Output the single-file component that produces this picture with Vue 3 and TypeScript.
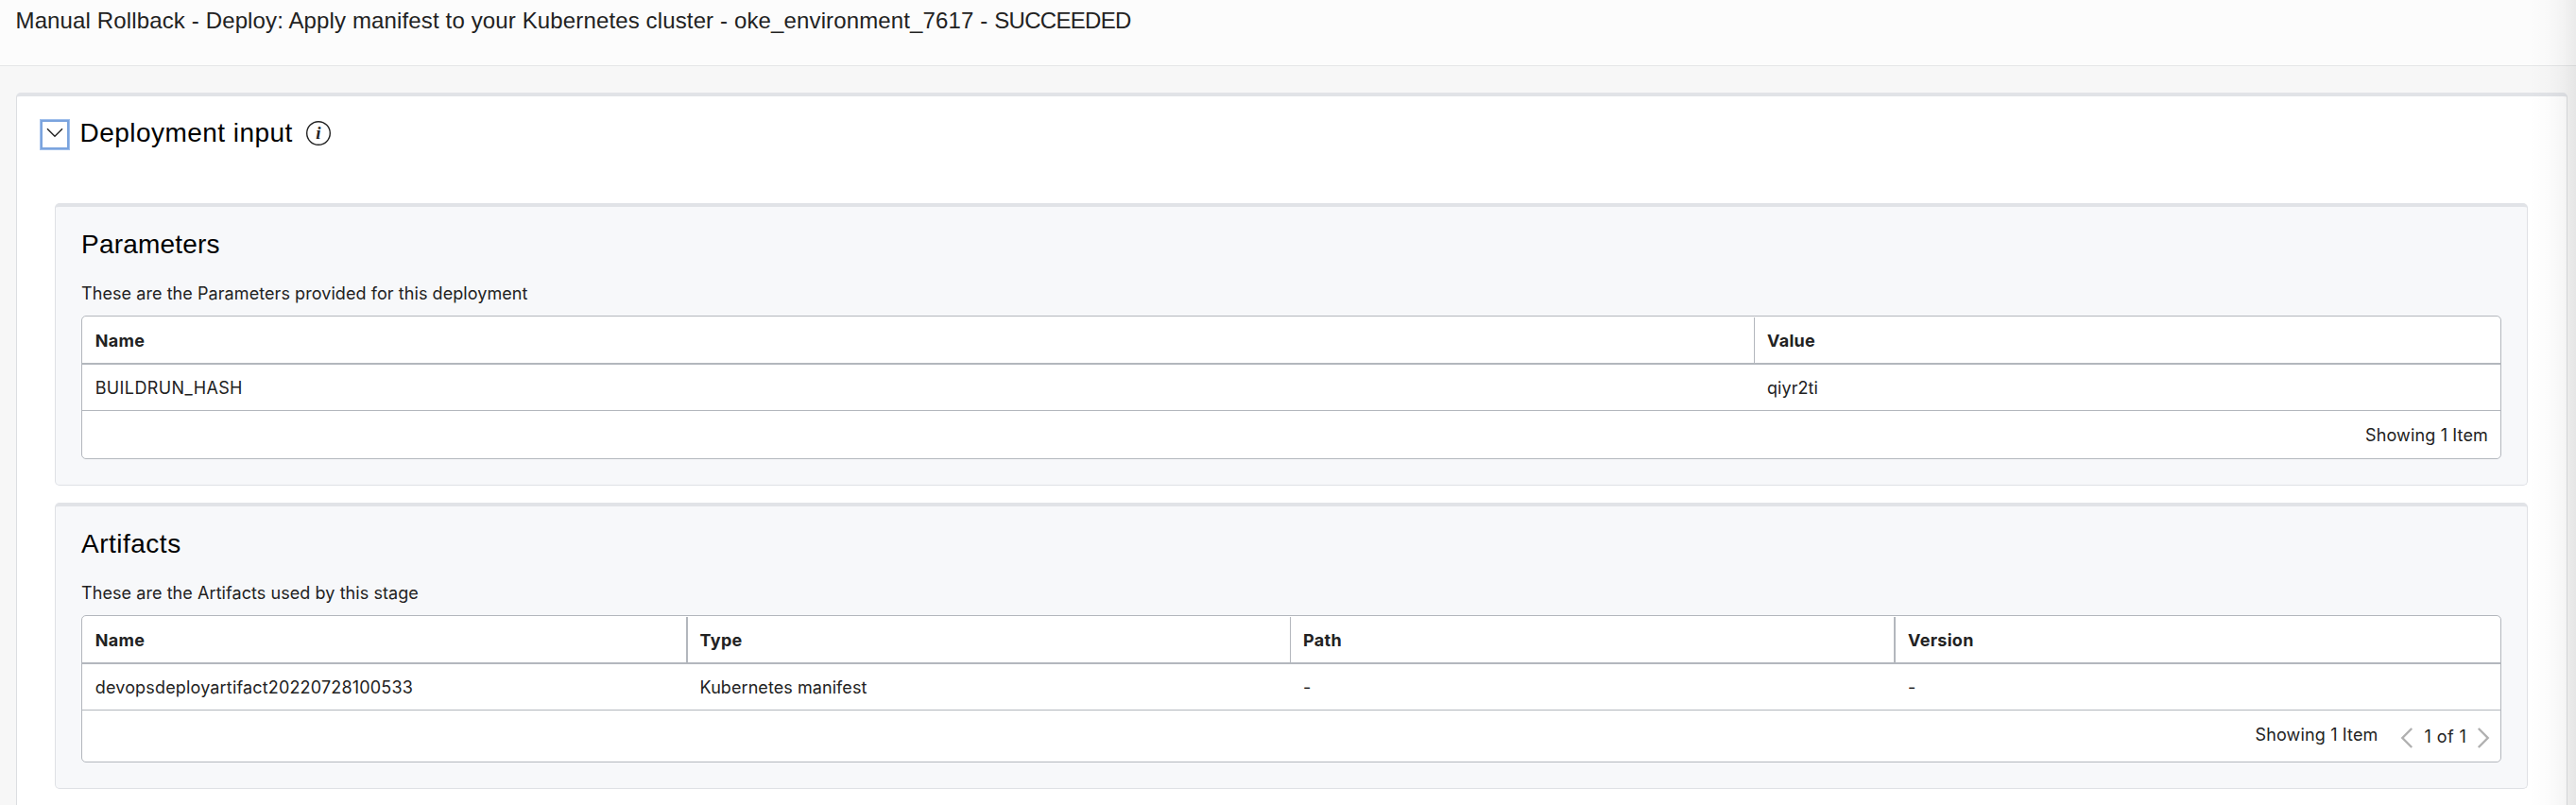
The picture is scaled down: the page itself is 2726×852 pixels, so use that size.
<script setup lang="ts">
import { ref } from 'vue'

interface Cell {
  text: string
  tracking?: 'snug' | 'loose'
}

interface Section {
  id: string
  title: string
  description: string
  columns: string[]
  rows: Cell[][]
  paged: boolean
}

const expanded = ref(true)

const sections: Section[] = [
  {
    id: 'parameters',
    title: 'Parameters',
    description: 'These are the Parameters provided for this deployment',
    columns: ['Name', 'Value'],
    rows: [[{ text: 'BUILDRUN_HASH', tracking: 'loose' }, { text: 'qiyr2ti' }]],
    paged: false,
  },
  {
    id: 'artifacts',
    title: 'Artifacts',
    description: 'These are the Artifacts used by this stage',
    columns: ['Name', 'Type', 'Path', 'Version'],
    rows: [
      [
        { text: 'devopsdeployartifact20220728100533', tracking: 'snug' },
        { text: 'Kubernetes manifest' },
        { text: '-' },
        { text: '-' },
      ],
    ],
    paged: true,
  },
]
</script>

<template>
  <div class="page">
    <header class="page-header">
      <h1>Manual Rollback - Deploy: Apply manifest to your Kubernetes cluster - oke_environment_7617 - <span class="status">SUCCEEDED</span></h1>
    </header>

    <main class="card">
      <div class="card-heading">
        <button class="toggle" type="button" aria-label="Toggle deployment input" @click="expanded = !expanded">
          <svg width="18" height="11" viewBox="0 0 18 11">
            <path d="M1 1.2 L9 9.2 L17 1.2" fill="none" stroke="#222" stroke-width="1.4" />
          </svg>
        </button>
        <h2>Deployment input</h2>
        <svg class="info" width="28" height="28" viewBox="0 0 28 28">
          <circle cx="14" cy="14" r="12.3" fill="none" stroke="#222" stroke-width="1.4" />
          <text x="14" y="20" text-anchor="middle">i</text>
        </svg>
      </div>

      <div v-if="expanded" class="panels">
        <section v-for="s in sections" :key="s.id" class="panel" :class="s.id">
          <h3>{{ s.title }}</h3>
          <p>{{ s.description }}</p>
          <div class="table">
            <div class="row head">
              <div v-for="c in s.columns" :key="c" class="cell">{{ c }}</div>
            </div>
            <div v-for="(r, i) in s.rows" :key="i" class="row body">
              <div v-for="(c, j) in r" :key="j" class="cell" :class="c.tracking">{{ c.text }}</div>
            </div>
            <div class="footer" :class="{ paged: s.paged }">
              <span class="count">Showing 1 Item</span>
              <div v-if="s.paged" class="pager">
                <svg width="14" height="22" viewBox="0 0 14 22">
                  <path d="M12.2 1 L2.3 11 L12.2 21" fill="none" stroke="#b0b0b0" stroke-width="2.4" />
                </svg>
                <span class="page-number">1 of 1</span>
                <svg width="14" height="22" viewBox="0 0 14 22">
                  <path d="M1.8 1 L11.7 11 L1.8 21" fill="none" stroke="#b0b0b0" stroke-width="2.4" />
                </svg>
              </div>
            </div>
          </div>
        </section>
      </div>
    </main>
    <div class="edge-shadow"></div>
  </div>
</template>

<style>
body {
  margin: 0;
  overflow: hidden;
}
</style>

<style scoped>
.page {
  position: relative;
  box-sizing: border-box;
  width: 100%;
  height: 852px;
  overflow: hidden;
  background: #f7f7f7;
  color: #222;
  font-family: Inter, "Liberation Sans", sans-serif;
  font-size: 18px;
  letter-spacing: 0.07px;
}

h1,
h2,
h3,
p {
  margin: 0;
  font-weight: 400;
}

.page-header {
  box-sizing: border-box;
  height: 70px;
  padding: 8px 16px 0 16.5px;
  border-bottom: 1px solid #e5e6e7;
  background: #fcfcfc;
}

h1 {
  font: 400 24px/28px "Liberation Sans", Arial, sans-serif;
  letter-spacing: 0.135px;
  white-space: nowrap;
}

.status {
  letter-spacing: -0.7px;
}

.card {
  box-sizing: border-box;
  height: 800px;
  margin: 28px 9px 0 17px;
  border: 1px solid #dcdee1;
  border-top: 4px solid #e1e3e7;
  border-radius: 5px;
  background: #fff;
}

.card-heading {
  display: flex;
  align-items: center;
  height: 33px;
  padding: 24px 0 0 24px;
}

.toggle {
  box-sizing: border-box;
  display: flex;
  align-items: center;
  justify-content: center;
  width: 32px;
  height: 33px;
  padding: 0 0 4px;
  border: 1px solid #9fbfec;
  background: #fff;
  box-shadow: inset 0 0 0 2px #7ba4de;
}

h2 {
  margin: -3px 0 0 10.5px;
  color: #000;
  font: 400 28px/32px "Liberation Sans", Arial, sans-serif;
  letter-spacing: 0.46px;
}

.info {
  margin: -3px 0 0 13px;
}

.info text {
  fill: #222;
  font: italic bold 19px "Liberation Serif", serif;
}

.panels {
  display: flex;
  flex-direction: column;
  gap: 18px;
  padding: 56px 41px 0 40px;
}

.panel {
  box-sizing: border-box;
  height: 299px;
  padding: 24px 27px 0;
  border: 1px solid #dfe1e5;
  border-top: 4px solid #e1e3e7;
  border-radius: 5px;
  background: #f7f8fa;
}

.artifacts {
  height: 303px;
}

h3 {
  height: 32px;
  color: #000;
  font: 400 28px/32px "Liberation Sans", Arial, sans-serif;
  letter-spacing: 0.2px;
}

.artifacts h3 {
  letter-spacing: 0.5px;
}

p {
  height: 24px;
  margin-top: 24px;
  line-height: 24px;
}

.table {
  box-sizing: border-box;
  margin-top: 11px;
  border: 1px solid #b3b7bd;
  border-radius: 5px;
  background: #fff;
}

.row {
  display: grid;
}

.parameters .row {
  grid-template-columns: 1770px 1fr;
}

.artifacts .row {
  grid-template-columns: 641px 638px 640px 1fr;
}

.head {
  height: 49px;
  border-bottom: 2px solid #b3b7bd;
  font-weight: 700;
  letter-spacing: 0.3px;
}

.cell {
  padding-left: 13px;
  line-height: 49px;
}

.cell:first-child {
  padding-left: 13.7px;
}

.artifacts .cell:nth-child(2) {
  padding-left: 12.6px;
}

.head .cell {
  margin-top: 1px;
  border-right: 1px solid #b3b7bd;
}

.artifacts .head .cell:nth-child(odd) {
  border-right-width: 2px;
}

.artifacts .head .cell:last-child,
.parameters .head .cell:last-child {
  border-right: 0;
}

.body {
  height: 48px;
  border-bottom: 1px solid #b3b7bd;
}

.snug {
  letter-spacing: 0.17px;
}

.loose {
  letter-spacing: 0.38px;
}

.footer {
  display: flex;
  align-items: center;
  justify-content: flex-end;
  height: 50px;
  padding-right: 13px;
}

.count {
  padding-top: 2px;
  line-height: 24px;
  letter-spacing: 0.15px;
}

.paged {
  height: 54px;
  padding-right: 11px;
}

.paged .count {
  margin: -4px 23px 0 0;
}

.pager {
  display: flex;
  align-items: center;
  padding-top: 3px;
}

.page-number {
  width: 44.5px;
  margin: -1px 11px 0 12px;
  line-height: 24px;
  letter-spacing: 0.4px;
  white-space: nowrap;
}

.edge-shadow {
  position: absolute;
  top: 0;
  right: 0;
  bottom: 0;
  width: 50px;
  background: linear-gradient(to right, rgba(0, 0, 0, 0), rgba(0, 0, 0, 0.012) 40%, rgba(0, 0, 0, 0.035) 72%, rgba(0, 0, 0, 0.07));
  pointer-events: none;
}
</style>
